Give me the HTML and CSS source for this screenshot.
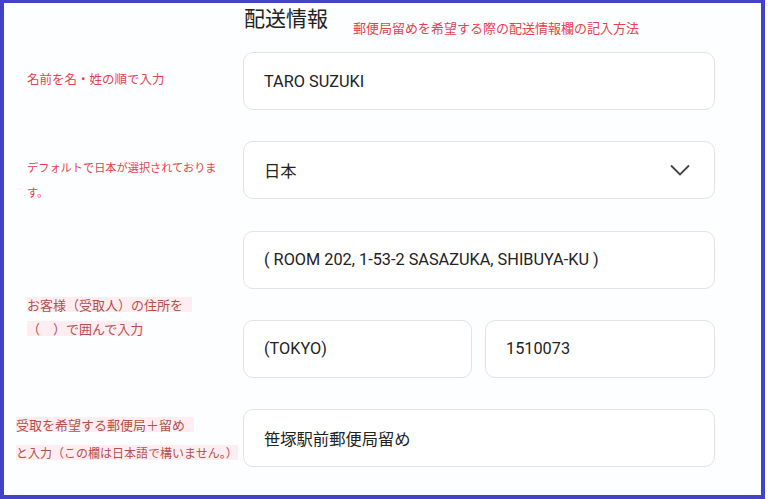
FILE: index.html
```html
<!DOCTYPE html>
<html lang="ja">
<head>
  <meta charset="UTF-8">
  <meta name="viewport" content="width=device-width, initial-scale=1.0">
  <title>配送情報の記入方法</title>
  <link rel="stylesheet" href="styles.css">
</head>
<body>
  <div class="frame">
    <div class="head">
      <h1 class="head-title">配送情報</h1>
      <div class="head-note">郵便局留めを希望する際の配送情報欄の記入方法</div>
    </div>
    <div class="form">
      <div class="hint hint-name">名前を名・姓の順で入力</div>
      <div class="field">TARO SUZUKI</div>

      <div class="hint hint-country">デフォルトで日本が選択されております。</div>
      <div class="field field-select">
        <span>日本</span>
        <svg class="chevron" width="20" height="12" viewBox="0 0 20 12">
          <polyline points="1,1.5 10,10.5 19,1.5" fill="none" stroke="#444" stroke-width="1.8"/>
        </svg>
      </div>

      <div class="hint hint-address">
        <span class="mark mark-wide">お客様（受取人）の住所を</span>
        <span class="mark">（　）で囲んで入力</span>
      </div>
      <div class="field">( ROOM 202, 1-53-2 SASAZUKA, SHIBUYA-KU )</div>
      <div class="field-pair">
        <div class="field">(TOKYO)</div>
        <div class="field">1510073</div>
      </div>

      <div class="hint hint-post">
        <span class="mark mark-wide">受取を希望する郵便局＋留め</span>
        <span class="mark mark-small">と入力（この欄は日本語で構いません。）</span>
      </div>
      <div class="field">笹塚駅前郵便局留め</div>
    </div>
  </div>
</body>
</html>
```

FILE: styles.css
```css
:root {
  --frame: #4343c8;
  --red: #e8404f;
  --brown: #b4504b;
  --mark-bg: #ffedf1;
  --line: #e3e3e3;
  --text: #222;
}
html, body {
  margin: 0;
  padding: 0;
  background: #fff;
}
body {
  font-family: 'Noto Sans CJK JP', sans-serif;
  color: var(--text);
}
.frame {
  width: 765px;
  height: 499px;
  box-sizing: border-box;
  border: 4px solid var(--frame);
  border-top-width: 3px;
  background: #fdfeff;
  overflow: hidden;
}
.head {
  display: flex;
  align-items: flex-start;
  height: 49px;
  padding-left: 240px;
}
.head-title {
  margin: 2px 0 0 0;
  font-size: 21px;
  font-weight: 400;
  line-height: 25px;
  color: var(--text);
}
.head-note {
  margin: 17px 0 0 25px;
  font-size: 13px;
  line-height: 16px;
  color: var(--red);
}
.form {
  display: grid;
  grid-template-columns: 239px 472px;
  grid-template-rows: repeat(5, 58px);
  row-gap: 31.25px;
}
.hint {
  grid-column: 1;
  align-self: start;
  font-size: 12.5px;
  line-height: 25px;
  color: var(--red);
}
.hint-name {
  margin: 14px 0 0 23px;
}
.hint-country {
  width: 196px;
  margin: 14px 0 0 23px;
  font-size: 11.2px;
}
.hint-address {
  grid-row: 3 / span 2;
  margin: 66px 0 0 23px;
  display: flex;
  flex-direction: column;
  align-items: flex-start;
  gap: 9px;
  font-size: 13px;
  line-height: 15px;
  color: var(--brown);
}
.hint-post {
  margin: 8px 0 0 12px;
  display: flex;
  flex-direction: column;
  align-items: flex-start;
  gap: 13px;
  font-size: 13px;
  line-height: 15px;
  color: var(--brown);
}
.mark {
  background: var(--mark-bg);
}
.mark-wide {
  padding-right: 9px;
}
.mark-small {
  font-size: 12px;
}
.field {
  grid-column: 2;
  display: flex;
  align-items: center;
  justify-content: space-between;
  box-sizing: border-box;
  height: 58px;
  padding: 0 24px 0 20px;
  border: 1px solid var(--line);
  border-radius: 10px;
  background: #fff;
  font-family: Roboto, 'Noto Sans CJK JP', sans-serif;
  font-size: 16.3px;
  color: var(--text);
}
.field-pair {
  grid-column: 2;
  display: grid;
  grid-template-columns: 229px 230px;
  column-gap: 13px;
}
.field-pair .field {
  grid-column: auto;
}
.chevron {
  display: block;
}
```
